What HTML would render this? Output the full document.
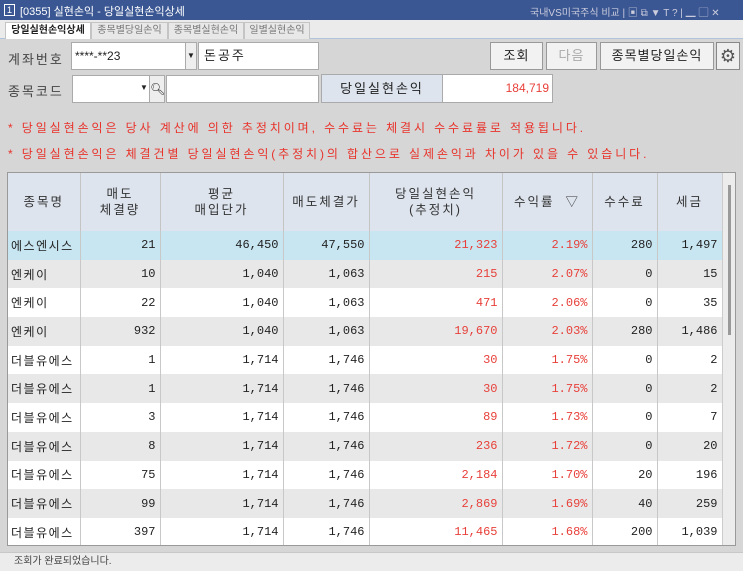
<!DOCTYPE html>
<html><head><meta charset="utf-8"><style>
*{margin:0;padding:0;box-sizing:border-box}
body{width:743px;height:571px;overflow:hidden;background:#d6d6d6;font-family:"Liberation Sans","Noto Sans CJK KR",sans-serif;font-size:12px;color:#222;position:relative}
.abs{position:absolute}
.title{left:0;top:0;width:743px;height:20px;background:#3a5793;color:#fff;font-size:11px}
.tabs{left:0;top:20px;width:743px;height:19px;background:#ebebeb;border-bottom:1px solid #b0c4de}
.tab{position:absolute;top:2px;height:17px;border:1px solid #c4c4c4;border-bottom:none;font-size:10px;color:#777;text-align:center;line-height:15px;background:#e8e8e8}
.inp{background:#fff;border:1px solid #aaa}
.btn{background:#f2f2f2;border:1px solid #999;text-align:center;line-height:26px;font-size:13px;letter-spacing:1px}
.lbl{font-size:13px;color:#444;letter-spacing:2px}
.note{color:#e8322a;font-size:12px;letter-spacing:2.9px}
table{border-collapse:collapse;table-layout:fixed;font-size:12px}
td{border-right:1px solid #c8c8c8;height:28.7px;padding:0 4px;text-align:right;white-space:nowrap;overflow:hidden;font-family:"Liberation Mono","Noto Sans CJK KR",monospace}
td:first-child{text-align:left;padding-left:3px;letter-spacing:1.5px;font-family:"Liberation Sans","Noto Sans CJK KR",sans-serif}
th{background:#dde4ee;border-right:1px solid #c4c4c4;height:58px;font-weight:normal;font-size:12.5px;color:#333;letter-spacing:2px;line-height:16px}
.r{color:#e8403a}
tr.g td{background:#e8e8e8}
tr.w td{background:#fff}
tr.s td{background:#c8e6f2}
</style></head><body>
<div class="abs title">
 <div class="abs" style="left:4px;top:4px;width:11px;height:12px;border:1px solid #fff;font-size:9px;line-height:10px;text-align:center">1</div>
 <div class="abs" style="left:20px;top:3px">[0355] 실현손익 - 당일실현손익상세</div>
 <div class="abs" style="left:530px;top:4px;font-size:10px;color:#ccd">국내VS미국주식 비교 | ▣ ⧉ ▼ T ? | ▁ ▢ ✕</div>
</div>
<div class="abs tabs">
 <div class="tab" style="left:5px;width:86px;background:#fff;color:#222;font-weight:bold">당일실현손익상세</div>
 <div class="tab" style="left:91px;width:77px">종목별당일손익</div>
 <div class="tab" style="left:168px;width:76px">종목별실현손익</div>
 <div class="tab" style="left:244px;width:66px">일별실현손익</div>
</div>
<div class="abs lbl" style="left:8px;top:49px">계좌번호</div>
<div class="abs inp" style="left:71px;top:42px;width:126px;height:28px;font-size:12px;line-height:26px;padding-left:3px">****-**23</div>
<div class="abs" style="left:185px;top:42px;width:12px;height:28px;background:#eee;border:1px solid #aaa;font-size:8px;line-height:26px;text-align:center">▼</div>
<div class="abs inp" style="left:198px;top:42px;width:121px;height:28px;font-size:13px;line-height:26px;padding-left:5px;letter-spacing:2px">돈공주</div>
<div class="abs btn" style="left:490px;top:42px;width:53px;height:28px">조회</div>
<div class="abs btn" style="left:546px;top:42px;width:51px;height:28px;color:#aaa">다음</div>
<div class="abs btn" style="left:600px;top:42px;width:114px;height:28px">종목별당일손익</div>
<div class="abs" style="left:716px;top:42px;width:24px;height:28px;background:#eee;border:1px solid #888;text-align:center;line-height:26px;font-size:18px;color:#555">⚙</div>
<div class="abs lbl" style="left:8px;top:81px">종목코드</div>
<div class="abs inp" style="left:72px;top:75px;width:93px;height:28px"></div>
<div class="abs" style="left:140px;top:75px;width:10px;height:28px;font-size:8px;line-height:26px">▼</div>
<div class="abs" style="left:149px;top:75px;width:16px;height:28px;background:#eee;border:1px solid #aaa;text-align:center;line-height:26px">🔍︎</div>
<div class="abs inp" style="left:166px;top:75px;width:153px;height:28px"></div>
<div class="abs" style="left:321px;top:74px;width:122px;height:29px;background:#dde4ee;border:1px solid #aaa;font-size:13px;line-height:27px;text-align:center;letter-spacing:2px">당일실현손익</div>
<div class="abs inp" style="left:442px;top:74px;width:111px;height:29px;text-align:right;padding-right:3px;line-height:27px;color:#e8403a">184,719</div>
<div class="abs note" style="left:8px;top:119px">* 당일실현손익은 당사 계산에 의한 추정치이며, 수수료는 체결시 수수료률로 적용됩니다.</div>
<div class="abs note" style="left:8px;top:145px">* 당일실현손익은 체결건별 당일실현손익(추정치)의 합산으로 실제손익과 차이가 있을 수 있습니다.</div>
<div class="abs" style="left:7px;top:172px;width:729px;height:374px;background:#fff;border:1px solid #999;overflow:hidden">
<table style="width:714px">
<colgroup><col style="width:72px"><col style="width:80px"><col style="width:123px"><col style="width:86px"><col style="width:133px"><col style="width:90px"><col style="width:65px"><col style="width:65px"></colgroup>
<tr><th style="text-align:center">종목명</th><th>매도<br>체결량</th><th>평균<br>매입단가</th><th>매도체결가</th><th>당일실현손익<br>(추정치)</th><th>수익률 &nbsp;▽</th><th>수수료</th><th>세금</th></tr>
<tr class="s"><td>에스엔시스</td><td>21</td><td>46,450</td><td>47,550</td><td class="r">21,323</td><td class="r">2.19%</td><td>280</td><td>1,497</td></tr>
<tr class="g"><td>엔케이</td><td>10</td><td>1,040</td><td>1,063</td><td class="r">215</td><td class="r">2.07%</td><td>0</td><td>15</td></tr>
<tr class="w"><td>엔케이</td><td>22</td><td>1,040</td><td>1,063</td><td class="r">471</td><td class="r">2.06%</td><td>0</td><td>35</td></tr>
<tr class="g"><td>엔케이</td><td>932</td><td>1,040</td><td>1,063</td><td class="r">19,670</td><td class="r">2.03%</td><td>280</td><td>1,486</td></tr>
<tr class="w"><td>더블유에스</td><td>1</td><td>1,714</td><td>1,746</td><td class="r">30</td><td class="r">1.75%</td><td>0</td><td>2</td></tr>
<tr class="g"><td>더블유에스</td><td>1</td><td>1,714</td><td>1,746</td><td class="r">30</td><td class="r">1.75%</td><td>0</td><td>2</td></tr>
<tr class="w"><td>더블유에스</td><td>3</td><td>1,714</td><td>1,746</td><td class="r">89</td><td class="r">1.73%</td><td>0</td><td>7</td></tr>
<tr class="g"><td>더블유에스</td><td>8</td><td>1,714</td><td>1,746</td><td class="r">236</td><td class="r">1.72%</td><td>0</td><td>20</td></tr>
<tr class="w"><td>더블유에스</td><td>75</td><td>1,714</td><td>1,746</td><td class="r">2,184</td><td class="r">1.70%</td><td>20</td><td>196</td></tr>
<tr class="g"><td>더블유에스</td><td>99</td><td>1,714</td><td>1,746</td><td class="r">2,869</td><td class="r">1.69%</td><td>40</td><td>259</td></tr>
<tr class="w"><td>더블유에스</td><td>397</td><td>1,714</td><td>1,746</td><td class="r">11,465</td><td class="r">1.68%</td><td>200</td><td>1,039</td></tr>
</table>
<div class="abs" style="left:714px;top:0;width:14px;height:372px;background:#ececec;border-left:1px solid #ccc"><div style="margin:12px 0 0 5px;width:3px;height:150px;background:#999"></div></div>
</div>
<div class="abs" style="left:0;top:552px;width:743px;height:19px;background:#ececec;border-top:1px solid #c8c8c8;font-size:10px;color:#444;line-height:18px;padding-left:14px">조회가 완료되었습니다.</div>
</body></html>
